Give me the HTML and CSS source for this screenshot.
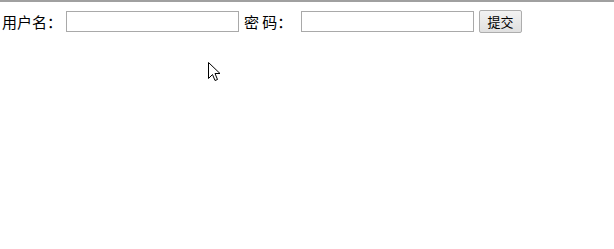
FILE: index.html
```html
<!DOCTYPE html>
<html lang="zh">
<head>
<meta charset="utf-8">
<link rel="stylesheet" href="styles.css">
</head>
<body>
<div class="topline"></div>
<form class="login">
  <label class="lbl">用户名：</label><input class="field" type="text">
  <label class="lbl pw">密 码：</label><input class="field" type="password">
  <button class="submit" type="button">提交</button>
</form>
<svg class="cursor" width="13" height="20" viewBox="0 0 13 20">
  <path d="M0.5 0.5 L0.5 16.5 L4.5 12.5 L7 18.5 L9.5 17.5 L7 11.5 L12 11.5 Z" fill="#fff" stroke="#000" stroke-width="1"/>
</svg>
</body>
</html>
```
FILE: styles.css
```css
html, body {
  margin: 0;
  padding: 0;
  background: #fff;
}
body {
  position: relative;
  height: 249px;
  font-family: "Noto Sans CJK SC", "Liberation Sans", sans-serif;
  font-size: 15px;
  color: #000;
}
.topline {
  height: 2px;
  background: #a0a0a0;
}
.login {
  display: flex;
  align-items: center;
  padding: 8px 0 0 2px;
  height: 23px;
}
.lbl {
  line-height: 23px;
  width: 64px;
  white-space: nowrap;
}
.lbl.pw {
  width: 57px;
  margin-left: 5px;
}
.field {
  box-sizing: border-box;
  width: 173px;
  height: 21px;
  border: 1px solid #a9a9a9;
  margin: 0;
  padding: 0 2px;
  background: #fff;
}
.submit {
  box-sizing: border-box;
  margin-left: 5px;
  width: 43px;
  height: 23px;
  padding: 0;
  font-family: "Noto Sans CJK SC", sans-serif;
  font-size: 13px;
  border: 1px solid #adadad;
  border-radius: 2px;
  background: linear-gradient(#f2f2f2, #e0e0e0);
  color: #000;
}
.cursor {
  position: absolute;
  left: 208px;
  top: 62px;
}
```
